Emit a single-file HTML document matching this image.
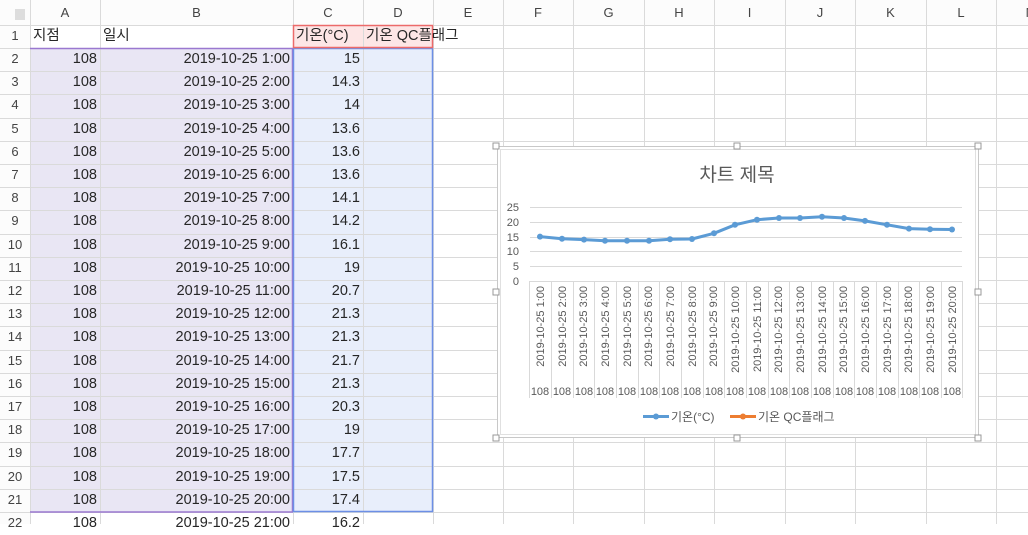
<!DOCTYPE html>
<html><head><meta charset="utf-8"><style>
body{margin:0;width:1028px;height:524px;overflow:hidden;background:#fff;font-family:"Liberation Sans","Noto Sans CJK KR",sans-serif;position:relative}
.a{position:absolute;box-sizing:border-box}
.t{position:absolute;font-size:14.5px;color:#262626;line-height:23px;white-space:nowrap}
.h{position:absolute;font-size:13px;color:#444;text-align:center;line-height:25px}
.r{position:absolute;font-size:13px;color:#444;text-align:center;width:30px;left:0}
</style></head><body>
<svg class="a" style="left:0;top:0" width="1028" height="524">
<rect x="0" y="0" width="1028" height="25" fill="#fcfcfc"/>
<rect x="0" y="0" width="30" height="524" fill="#fcfcfc"/>
<rect x="30" y="48" width="263" height="464" fill="#e9e6f4"/>
<rect x="293" y="48" width="140" height="464" fill="#e8eefb"/>
<rect x="293" y="25" width="140" height="23" fill="#fde6e6"/>
<g stroke="#dadada" stroke-width="1">
<path d="M0 25.5H1028 M0 48.5H1028 M0 71.5H1028 M0 94.5H1028 M0 118.5H1028 M0 141.5H1028 M0 164.5H1028 M0 187.5H1028 M0 210.5H1028 M0 234.5H1028 M0 257.5H1028 M0 280.5H1028 M0 303.5H1028 M0 326.5H1028 M0 350.5H1028 M0 373.5H1028 M0 396.5H1028 M0 419.5H1028 M0 442.5H1028 M0 466.5H1028 M0 489.5H1028 M0 512.5H1028"/>
<path d="M30.5 0V524 M100.5 0V524 M293.5 0V524 M363.5 0V524 M433.5 0V524 M503.5 0V524 M573.5 0V524 M644.5 0V524 M714.5 0V524 M785.5 0V524 M855.5 0V524 M926.5 0V524 M996.5 0V524"/>
</g>
<path d="M30 48.5H293 M292.5 48V512 M30 512H293" stroke="#9a78d0" stroke-width="1.5"/>
<rect x="293.5" y="48.5" width="139" height="463" fill="none" stroke="#6c8fe6" stroke-width="1.5"/>
<rect x="293.5" y="25.5" width="139" height="22" fill="none" stroke="#ec6a6a" stroke-width="1.5"/>
<path d="M15 9L25 9 25 20 15 20Z" fill="#ddd"/>
</svg>
<div class="h" style="left:30px;width:70px;top:0">A</div>
<div class="h" style="left:100px;width:193px;top:0">B</div>
<div class="h" style="left:293px;width:70px;top:0">C</div>
<div class="h" style="left:363px;width:70px;top:0">D</div>
<div class="h" style="left:433px;width:70px;top:0">E</div>
<div class="h" style="left:503px;width:70px;top:0">F</div>
<div class="h" style="left:573px;width:71px;top:0">G</div>
<div class="h" style="left:644px;width:70px;top:0">H</div>
<div class="h" style="left:714px;width:71px;top:0">I</div>
<div class="h" style="left:785px;width:70px;top:0">J</div>
<div class="h" style="left:855px;width:71px;top:0">K</div>
<div class="h" style="left:926px;width:70px;top:0">L</div>
<div class="h" style="left:996px;width:70px;top:0">M</div>
<div class="t" style="left:33px;top:25px">지점</div>
<div class="t" style="left:103px;top:25px">일시</div>
<div class="t" style="left:296px;top:25px">기온(°C)</div>
<div class="t" style="left:366px;top:25px">기온 QC플래그</div>
<div id="rows">
<div class="r" style="top:28px">1</div>
<div class="r" style="top:51px">2</div><div class="t" style="left:30px;width:67px;text-align:right;top:48px">108</div><div class="t" style="left:100px;width:190px;text-align:right;top:48px">2019-10-25 1:00</div><div class="t" style="left:293px;width:67px;text-align:right;top:48px">15</div>
<div class="r" style="top:74px">3</div><div class="t" style="left:30px;width:67px;text-align:right;top:71px">108</div><div class="t" style="left:100px;width:190px;text-align:right;top:71px">2019-10-25 2:00</div><div class="t" style="left:293px;width:67px;text-align:right;top:71px">14.3</div>
<div class="r" style="top:97px">4</div><div class="t" style="left:30px;width:67px;text-align:right;top:94px">108</div><div class="t" style="left:100px;width:190px;text-align:right;top:94px">2019-10-25 3:00</div><div class="t" style="left:293px;width:67px;text-align:right;top:94px">14</div>
<div class="r" style="top:121px">5</div><div class="t" style="left:30px;width:67px;text-align:right;top:118px">108</div><div class="t" style="left:100px;width:190px;text-align:right;top:118px">2019-10-25 4:00</div><div class="t" style="left:293px;width:67px;text-align:right;top:118px">13.6</div>
<div class="r" style="top:144px">6</div><div class="t" style="left:30px;width:67px;text-align:right;top:141px">108</div><div class="t" style="left:100px;width:190px;text-align:right;top:141px">2019-10-25 5:00</div><div class="t" style="left:293px;width:67px;text-align:right;top:141px">13.6</div>
<div class="r" style="top:167px">7</div><div class="t" style="left:30px;width:67px;text-align:right;top:164px">108</div><div class="t" style="left:100px;width:190px;text-align:right;top:164px">2019-10-25 6:00</div><div class="t" style="left:293px;width:67px;text-align:right;top:164px">13.6</div>
<div class="r" style="top:190px">8</div><div class="t" style="left:30px;width:67px;text-align:right;top:187px">108</div><div class="t" style="left:100px;width:190px;text-align:right;top:187px">2019-10-25 7:00</div><div class="t" style="left:293px;width:67px;text-align:right;top:187px">14.1</div>
<div class="r" style="top:213px">9</div><div class="t" style="left:30px;width:67px;text-align:right;top:210px">108</div><div class="t" style="left:100px;width:190px;text-align:right;top:210px">2019-10-25 8:00</div><div class="t" style="left:293px;width:67px;text-align:right;top:210px">14.2</div>
<div class="r" style="top:237px">10</div><div class="t" style="left:30px;width:67px;text-align:right;top:234px">108</div><div class="t" style="left:100px;width:190px;text-align:right;top:234px">2019-10-25 9:00</div><div class="t" style="left:293px;width:67px;text-align:right;top:234px">16.1</div>
<div class="r" style="top:260px">11</div><div class="t" style="left:30px;width:67px;text-align:right;top:257px">108</div><div class="t" style="left:100px;width:190px;text-align:right;top:257px">2019-10-25 10:00</div><div class="t" style="left:293px;width:67px;text-align:right;top:257px">19</div>
<div class="r" style="top:283px">12</div><div class="t" style="left:30px;width:67px;text-align:right;top:280px">108</div><div class="t" style="left:100px;width:190px;text-align:right;top:280px">2019-10-25 11:00</div><div class="t" style="left:293px;width:67px;text-align:right;top:280px">20.7</div>
<div class="r" style="top:306px">13</div><div class="t" style="left:30px;width:67px;text-align:right;top:303px">108</div><div class="t" style="left:100px;width:190px;text-align:right;top:303px">2019-10-25 12:00</div><div class="t" style="left:293px;width:67px;text-align:right;top:303px">21.3</div>
<div class="r" style="top:329px">14</div><div class="t" style="left:30px;width:67px;text-align:right;top:326px">108</div><div class="t" style="left:100px;width:190px;text-align:right;top:326px">2019-10-25 13:00</div><div class="t" style="left:293px;width:67px;text-align:right;top:326px">21.3</div>
<div class="r" style="top:353px">15</div><div class="t" style="left:30px;width:67px;text-align:right;top:350px">108</div><div class="t" style="left:100px;width:190px;text-align:right;top:350px">2019-10-25 14:00</div><div class="t" style="left:293px;width:67px;text-align:right;top:350px">21.7</div>
<div class="r" style="top:376px">16</div><div class="t" style="left:30px;width:67px;text-align:right;top:373px">108</div><div class="t" style="left:100px;width:190px;text-align:right;top:373px">2019-10-25 15:00</div><div class="t" style="left:293px;width:67px;text-align:right;top:373px">21.3</div>
<div class="r" style="top:399px">17</div><div class="t" style="left:30px;width:67px;text-align:right;top:396px">108</div><div class="t" style="left:100px;width:190px;text-align:right;top:396px">2019-10-25 16:00</div><div class="t" style="left:293px;width:67px;text-align:right;top:396px">20.3</div>
<div class="r" style="top:422px">18</div><div class="t" style="left:30px;width:67px;text-align:right;top:419px">108</div><div class="t" style="left:100px;width:190px;text-align:right;top:419px">2019-10-25 17:00</div><div class="t" style="left:293px;width:67px;text-align:right;top:419px">19</div>
<div class="r" style="top:445px">19</div><div class="t" style="left:30px;width:67px;text-align:right;top:442px">108</div><div class="t" style="left:100px;width:190px;text-align:right;top:442px">2019-10-25 18:00</div><div class="t" style="left:293px;width:67px;text-align:right;top:442px">17.7</div>
<div class="r" style="top:469px">20</div><div class="t" style="left:30px;width:67px;text-align:right;top:466px">108</div><div class="t" style="left:100px;width:190px;text-align:right;top:466px">2019-10-25 19:00</div><div class="t" style="left:293px;width:67px;text-align:right;top:466px">17.5</div>
<div class="r" style="top:492px">21</div><div class="t" style="left:30px;width:67px;text-align:right;top:489px">108</div><div class="t" style="left:100px;width:190px;text-align:right;top:489px">2019-10-25 20:00</div><div class="t" style="left:293px;width:67px;text-align:right;top:489px">17.4</div>
<div class="r" style="top:515px">22</div><div class="t" style="left:30px;width:67px;text-align:right;top:512px">108</div><div class="t" style="left:100px;width:190px;text-align:right;top:512px">2019-10-25 21:00</div><div class="t" style="left:293px;width:67px;text-align:right;top:512px">16.2</div>
</div>
<svg class="a" style="left:0;top:0" width="1028" height="524" font-family="Liberation Sans, Noto Sans CJK KR, sans-serif">
<rect x="497.5" y="146.5" width="481" height="291" fill="#fff" stroke="#c8c8c8"/>
<rect x="500.5" y="149.5" width="475" height="285" fill="none" stroke="#e0e0e0"/>
<g fill="#fff" stroke="#999"><rect x="493" y="143" width="6" height="6"/><rect x="734" y="143" width="6" height="6"/><rect x="975" y="143" width="6" height="6"/><rect x="493" y="289" width="6" height="6"/><rect x="975" y="289" width="6" height="6"/><rect x="493" y="435" width="6" height="6"/><rect x="734" y="435" width="6" height="6"/><rect x="975" y="435" width="6" height="6"/></g>
<text x="737" y="181" font-size="19" fill="#595959" text-anchor="middle">차트 제목</text>
<g stroke="#d9d9d9"><path d="M530 207.5H962 M530 222.5H962 M530 237.5H962 M530 251.5H962 M530 266.5H962 M530 281.5H962"/>
<path d="M529.5 281V398 M551.5 281V398 M573.5 281V398 M594.5 281V398 M616.5 281V398 M638.5 281V398 M659.5 281V398 M681.5 281V398 M703.5 281V398 M724.5 281V398 M746.5 281V398 M768.5 281V398 M789.5 281V398 M811.5 281V398 M833.5 281V398 M854.5 281V398 M876.5 281V398 M898.5 281V398 M919.5 281V398 M941.5 281V398 M962.5 281V398"/></g>
<g font-size="11" fill="#595959" text-anchor="end"><text x="519" y="211">25</text><text x="519" y="226">20</text><text x="519" y="241">15</text><text x="519" y="255">10</text><text x="519" y="270">5</text><text x="519" y="285">0</text></g>
<g font-size="11" fill="#595959" text-anchor="end">
<text transform="translate(544,286) rotate(-90)">2019-10-25 1:00</text>
<text transform="translate(566,286) rotate(-90)">2019-10-25 2:00</text>
<text transform="translate(587,286) rotate(-90)">2019-10-25 3:00</text>
<text transform="translate(609,286) rotate(-90)">2019-10-25 4:00</text>
<text transform="translate(631,286) rotate(-90)">2019-10-25 5:00</text>
<text transform="translate(652,286) rotate(-90)">2019-10-25 6:00</text>
<text transform="translate(674,286) rotate(-90)">2019-10-25 7:00</text>
<text transform="translate(696,286) rotate(-90)">2019-10-25 8:00</text>
<text transform="translate(717,286) rotate(-90)">2019-10-25 9:00</text>
<text transform="translate(739,286) rotate(-90)">2019-10-25 10:00</text>
<text transform="translate(761,286) rotate(-90)">2019-10-25 11:00</text>
<text transform="translate(782,286) rotate(-90)">2019-10-25 12:00</text>
<text transform="translate(804,286) rotate(-90)">2019-10-25 13:00</text>
<text transform="translate(826,286) rotate(-90)">2019-10-25 14:00</text>
<text transform="translate(847,286) rotate(-90)">2019-10-25 15:00</text>
<text transform="translate(869,286) rotate(-90)">2019-10-25 16:00</text>
<text transform="translate(891,286) rotate(-90)">2019-10-25 17:00</text>
<text transform="translate(912,286) rotate(-90)">2019-10-25 18:00</text>
<text transform="translate(934,286) rotate(-90)">2019-10-25 19:00</text>
<text transform="translate(956,286) rotate(-90)">2019-10-25 20:00</text>
</g>
<g font-size="11" fill="#595959" text-anchor="middle">
<text x="540" y="395">108</text><text x="562" y="395">108</text><text x="584" y="395">108</text><text x="605" y="395">108</text><text x="627" y="395">108</text><text x="649" y="395">108</text><text x="670" y="395">108</text><text x="692" y="395">108</text><text x="714" y="395">108</text><text x="735" y="395">108</text><text x="757" y="395">108</text><text x="779" y="395">108</text><text x="800" y="395">108</text><text x="822" y="395">108</text><text x="844" y="395">108</text><text x="865" y="395">108</text><text x="887" y="395">108</text><text x="909" y="395">108</text><text x="930" y="395">108</text><text x="952" y="395">108</text>
</g>
<polyline fill="none" stroke="#5b9bd5" stroke-width="3" stroke-linejoin="round" points="540,236.6 562,238.7 584,239.6 605,240.7 627,240.7 649,240.7 670,239.3 692,239 714,233.3 735,224.8 757,219.7 779,218 800,218 822,216.8 844,218 865,220.9 887,224.8 909,228.6 930,229.2 952,229.5"/>
<g fill="#5b9bd5"><circle cx="540" cy="236.6" r="3"/><circle cx="562" cy="238.7" r="3"/><circle cx="584" cy="239.6" r="3"/><circle cx="605" cy="240.7" r="3"/><circle cx="627" cy="240.7" r="3"/><circle cx="649" cy="240.7" r="3"/><circle cx="670" cy="239.3" r="3"/><circle cx="692" cy="239" r="3"/><circle cx="714" cy="233.3" r="3"/><circle cx="735" cy="224.8" r="3"/><circle cx="757" cy="219.7" r="3"/><circle cx="779" cy="218" r="3"/><circle cx="800" cy="218" r="3"/><circle cx="822" cy="216.8" r="3"/><circle cx="844" cy="218" r="3"/><circle cx="865" cy="220.9" r="3"/><circle cx="887" cy="224.8" r="3"/><circle cx="909" cy="228.6" r="3"/><circle cx="930" cy="229.2" r="3"/><circle cx="952" cy="229.5" r="3"/></g>
<path d="M643 416.5H669" stroke="#5b9bd5" stroke-width="3"/><circle cx="656" cy="416.5" r="3" fill="#5b9bd5"/>
<text x="671" y="421" font-size="12" fill="#595959">기온(°C)</text>
<path d="M730 416.5H756" stroke="#ed7d31" stroke-width="3"/><circle cx="743" cy="416.5" r="3" fill="#ed7d31"/>
<text x="758" y="421" font-size="12" fill="#595959">기온 QC플래그</text>
</svg>
</body></html>
